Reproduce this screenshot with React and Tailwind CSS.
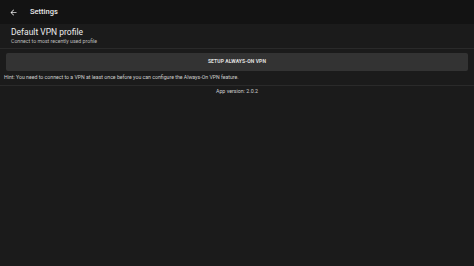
import React from "react";

function App() {
  return (
    <div
      className="w-[474px] h-[266px] bg-[#1b1b1b] text-white overflow-hidden"
      style={{ fontFamily: "Roboto, 'Noto Sans', sans-serif" }}
    >
      <div className="h-[24px] bg-[#131313] flex items-center px-[9px]">
        <svg width="9" height="9" viewBox="0 0 24 24" className="text-[#e6e6e6]">
          <path d="M20 11H7.83l5.59-5.59L12 4l-8 8 8 8 1.41-1.41L7.83 13H20v-2z" fill="currentColor" />
        </svg>
        <span className="ml-[12px] text-[7.5px] font-medium text-[#e8e8e8]">Settings</span>
      </div>
      <div className="px-[11px] pt-[3px] pb-[3px]">
        <div className="text-[8.5px] leading-[11px] text-[#ececec]">Default VPN profile</div>
        <div className="text-[5.2px] leading-[7px] text-[#bdbdbd]">Connect to most recently used profile</div>
      </div>
      <div className="h-px bg-[#2a2a2a]" />
      <div className="px-[6px] pt-[4px]">
        <div className="h-[18px] bg-[#333333] rounded-[2px] flex items-center justify-center text-[5px] font-bold tracking-[0.1px] text-[#e0e0e0]">
          SETUP ALWAYS-ON VPN
        </div>
      </div>
      <div className="px-[4px] pt-[2px] pb-[4px] text-[5.2px] leading-[8px]">
        <span className="text-[#cfcfcf]">
          Hint: You need to connect to a VPN at least once before you can configure the Always-On VPN feature.
        </span>
      </div>
      <div className="h-px bg-[#2a2a2a]" />
      <div className="pt-[1px] text-center text-[5.3px] leading-[8px] text-[#cfcfcf]">App version: 2.0.2</div>
    </div>
  );
}

export default App;
